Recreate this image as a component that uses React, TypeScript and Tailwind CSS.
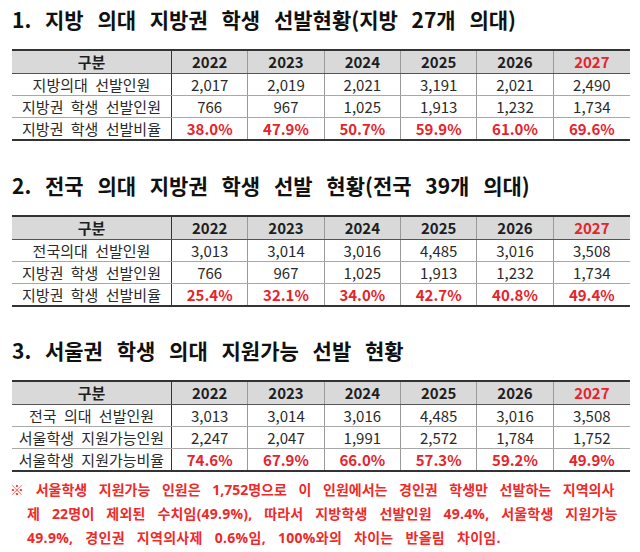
const font = "font-['Noto_Sans_CJK_KR','Noto_Sans',sans-serif]"

type Row = { label: string; values: string[]; red?: boolean }

interface Section {
  title: string
  rows: Row[]
}

const years = ["2022", "2023", "2024", "2025", "2026", "2027"]

const sections: Section[] = [
  {
    title: "1. 지방 의대 지방권 학생 선발현황(지방 27개 의대)",
    rows: [
      { label: "지방의대 선발인원", values: ["2,017", "2,019", "2,021", "3,191", "2,021", "2,490"] },
      { label: "지방권 학생 선발인원", values: ["766", "967", "1,025", "1,913", "1,232", "1,734"] },
      { label: "지방권 학생 선발비율", values: ["38.0%", "47.9%", "50.7%", "59.9%", "61.0%", "69.6%"], red: true }
    ]
  },
  {
    title: "2. 전국 의대 지방권 학생 선발 현황(전국 39개 의대)",
    rows: [
      { label: "전국의대 선발인원", values: ["3,013", "3,014", "3,016", "4,485", "3,016", "3,508"] },
      { label: "지방권 학생 선발인원", values: ["766", "967", "1,025", "1,913", "1,232", "1,734"] },
      { label: "지방권 학생 선발비율", values: ["25.4%", "32.1%", "34.0%", "42.7%", "40.8%", "49.4%"], red: true }
    ]
  },
  {
    title: "3. 서울권 학생 의대 지원가능 선발 현황",
    rows: [
      { label: "전국 의대 선발인원", values: ["3,013", "3,014", "3,016", "4,485", "3,016", "3,508"] },
      { label: "서울학생 지원가능인원", values: ["2,247", "2,047", "1,991", "2,572", "1,784", "1,752"] },
      { label: "서울학생 지원가능비율", values: ["74.6%", "67.9%", "66.0%", "57.3%", "59.2%", "49.9%"], red: true }
    ]
  }
]

const rowHeights = ["h-[22px] leading-[21px]", "h-[22px] leading-[21px]", "h-[21px] leading-[21px]"]

function DataTable({ rows }: { rows: Row[] }) {
  return (
    <div className="ml-[12px] w-[618px] border-t-2 border-b-2 border-[#333] text-[15px]">
      <div className="grid grid-cols-[160px_repeat(6,minmax(0,1fr))] h-[23px] leading-[22px] bg-[#d9d9d9] border-b border-[#555] font-bold text-[#1e1e1e]">
        <div className="text-center border-r border-[#333]">구분</div>
        {years.map((y, i) => (
          <div
            key={y}
            className={
              "text-center " +
              (i < 5 ? "border-r border-[#9a9a9a] " : "") +
              (y === "2027" ? "text-[#e5242c]" : "")
            }
          >
            {y}
          </div>
        ))}
      </div>
      {rows.map((row, r) => (
        <div
          key={row.label}
          className={
            "grid grid-cols-[160px_repeat(6,minmax(0,1fr))] " +
            rowHeights[r] +
            (r < rows.length - 1 ? " border-b border-[#a8a8a8]" : "")
          }
        >
          <div className="text-center border-r border-[#333] text-[#2a2a2a] whitespace-nowrap [word-spacing:4px]">
            {row.label}
          </div>
          {row.values.map((v, i) => (
            <div
              key={i}
              className={
                "text-center " +
                (i < 5 ? "border-r border-[#9a9a9a] " : "") +
                (row.red ? "font-bold text-[#e5242c]" : "text-[#2a2a2a]")
              }
            >
              {v}
            </div>
          ))}
        </div>
      ))}
    </div>
  )
}

export default function App() {
  return (
    <div className={`${font} w-[640px] h-[552px] bg-white overflow-hidden pt-[5px]`}>
      {sections.map((s, i) => (
        <div key={s.title} className={i === 0 ? "" : i === 1 ? "mt-[30px]" : "mt-[29px]"}>
          <h1 className="ml-[12px] h-[28px] leading-[28px] text-[21px] font-bold text-[#111] whitespace-nowrap [word-spacing:9px]">
            {s.title}
          </h1>
          <div className="mt-[16px]">
            <DataTable rows={s.rows} />
          </div>
        </div>
      ))}

      <div className="mt-[6px] ml-[10px] font-['Open_Sans','Noto_Sans_CJK_KR',sans-serif] text-[14px] leading-[24px] font-bold text-[#ee2a2a] whitespace-nowrap [word-spacing:8px]">
        <div>※ 서울학생 지원가능 인원은 1,752명으로 이 인원에서는 경인권 학생만 선발하는 지역의사</div>
        <div className="pl-[17px] tracking-[0.2px]">제 22명이 제외된 수치임(49.9%), 따라서 지방학생 선발인원 49.4%, 서울학생 지원가능</div>
        <div className="pl-[17px] tracking-[0.3px]">49.9%, 경인권 지역의사제 0.6%임, 100%와의 차이는 반올림 차이임.</div>
      </div>
    </div>
  )
}
